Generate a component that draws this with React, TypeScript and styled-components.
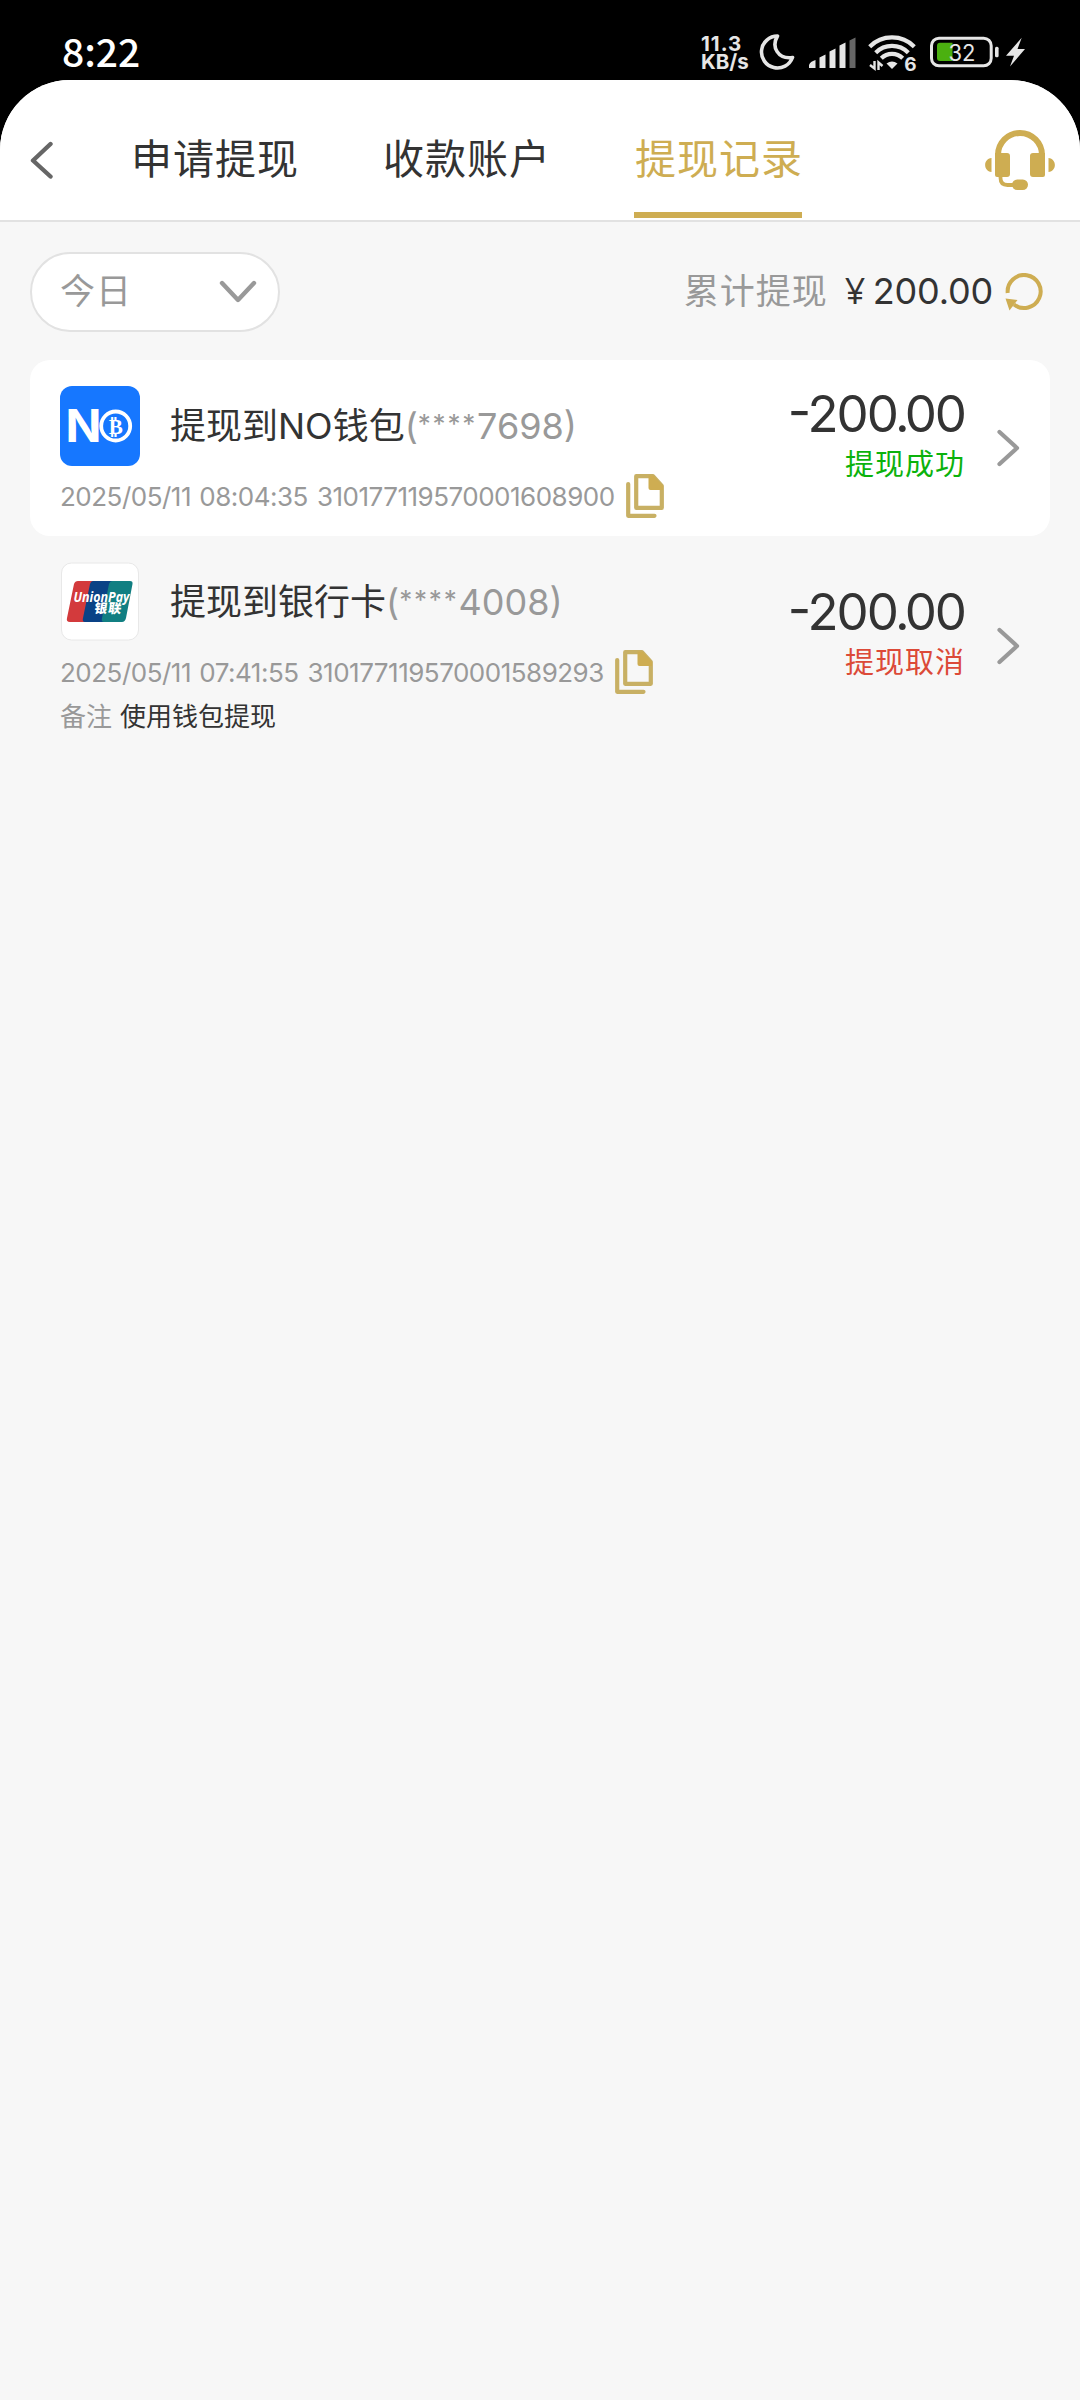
import React from "react";
import styled, { createGlobalStyle } from "styled-components";

const GOLD = "#cead52";
const INK = "#333333";
const MUTE = "#999999";

const Global = createGlobalStyle`
  * { box-sizing: border-box; }
  body { margin: 0; background: #000; font-family: Inter, "Noto Sans CJK SC", sans-serif; color: ${INK}; }
`;

const Page = styled.div`
  width: 1080px;
  height: 2400px;
  display: flex;
  flex-direction: column;
  background: #000;
  overflow: hidden;
`;

const StatusBar = styled.div`
  height: 80px;
  padding: 24px 54px 0 62px;
  display: flex;
  align-items: flex-start;
  color: #e6e6e6;
`;

const Clock = styled.div`
  flex: 1;
  font: 500 39px/52px "Noto Sans CJK SC", sans-serif;
  color: #fff;
`;

const Speed = styled.div`
  width: 50px;
  margin: 11px 7px 0 0;
  display: flex;
  flex-direction: column;
  font: 700 20.5px/18px Inter, sans-serif;
  white-space: nowrap;
`;

const Rate = styled.span`
  letter-spacing: 1px;
`;

const StatusGlyphs = styled.svg`
  display: block;
  flex: none;
`;

const Sheet = styled.main`
  flex: 1;
  display: flex;
  flex-direction: column;
  background: #f7f7f7;
  border-radius: 70px 70px 0 0;
  overflow: hidden;
`;

const Header = styled.header`
  height: 142px;
  display: flex;
  align-items: center;
  padding: 20px 25px 0 30px;
  background: #fff;
  border-bottom: 2px solid #e2e2e2;
`;

const Tabs = styled.nav`
  flex: 1;
  align-self: stretch;
  display: flex;
  gap: 84px;
  margin-top: -20px;
  padding-left: 77px;
`;

const Tab = styled.div<{ $active?: boolean }>`
  width: 168px;
  height: 138px;
  padding-left: 1px;
  border-bottom: 6px solid ${(p) => (p.$active ? GOLD : "transparent")};
  color: ${(p) => (p.$active ? GOLD : INK)};
  font-size: 41px;
  letter-spacing: 1px;
  line-height: 158px;
  white-space: nowrap;
`;

const Toolbar = styled.div`
  height: 138px;
  padding: 30px 36px 28px 30px;
  display: flex;
  justify-content: space-between;
  align-items: center;
`;

const Select = styled.div`
  width: 250px;
  height: 80px;
  padding: 0 21px 0 28px;
  display: flex;
  align-items: center;
  justify-content: space-between;
  border: 2px solid #e2e2e2;
  border-radius: 40px;
  background: #fff;
  color: ${MUTE};
`;

const SelectText = styled.span`
  padding-bottom: 7px;
  font-size: 35px;
  letter-spacing: 1px;
`;

const Total = styled.div`
  display: flex;
  align-items: center;
  white-space: nowrap;
`;

const TotalText = styled.div`
  display: flex;
  align-items: baseline;
  padding-bottom: 7px;
  margin-right: 12px;
  font-size: 36px;
`;

const TotalLabel = styled.span`
  color: ${MUTE};
  font-size: 35px;
  letter-spacing: 1px;
  margin-right: 17px;
`;

const Yen = styled.span`
  font-family: "Open Sans", sans-serif;
  width: 28px;
`;

const TotalValue = styled.span`
  letter-spacing: -0.2px;
`;

const List = styled.section`
  display: flex;
  flex-direction: column;
  padding: 0 30px;
`;

const Row = styled.article<{ $white?: boolean; $h: number }>`
  height: ${(p) => p.$h}px;
  padding: 0 30px;
  display: flex;
  align-items: center;
  border-radius: 20px;
  background: ${(p) => (p.$white ? "#fff" : "transparent")};
`;

const Details = styled.div`
  flex: 1;
  align-self: stretch;
  padding-top: 26px;
`;

const TitleLine = styled.div`
  height: 80px;
  display: flex;
  align-items: center;
  gap: 30px;
`;

const Title = styled.div`
  padding-bottom: 7px;
  font-size: 36px;
  white-space: nowrap;
`;

const Masked = styled.span`
  color: ${MUTE};
`;

const Stars = styled.span`
  font-size: 26px;
  line-height: 1;
  letter-spacing: 1.8px;
  vertical-align: 6px;
`;

const Meta = styled.div`
  height: 60px;
  display: flex;
  align-items: center;
  color: ${MUTE};
  font-size: 26px;
  letter-spacing: -0.5px;
  white-space: nowrap;
`;

const Stamp = styled.span`
  margin-right: 9px;
  word-spacing: 1.5px;
`;

const OrderId = styled.span`
  margin-right: 11.5px;
`;

const Memo = styled.div`
  display: flex;
  gap: 8px;
  font-size: 26px;
  line-height: 30px;
`;

const MemoLabel = styled.span`
  color: ${MUTE};
`;

const Figures = styled.div`
  display: flex;
  flex-direction: column;
  align-items: flex-end;
  margin-right: 32px;
  padding-bottom: 27px;
`;

const Amount = styled.div`
  font-size: 51px;
  line-height: 61px;
  letter-spacing: -2px;
  font-feature-settings: "case";
`;

const Point = styled.span`
  letter-spacing: -5px;
  margin-left: -2px;
`;

const State = styled.div<{ $ok: boolean }>`
  margin-top: -1px;
  font-size: 29px;
  letter-spacing: 1px;
  line-height: 44px;
  color: ${(p) => (p.$ok ? "#0bb20c" : "#dc4a38")};
`;

const BackIcon = () => (
  <svg width="23" height="38" viewBox="0 0 23 38" fill="none" stroke="#666" strokeWidth="4.4" strokeLinecap="round" strokeLinejoin="round">
    <path d="M20.5 3 3 19.5 20.5 35.5" />
  </svg>
);

const DownIcon = () => (
  <svg width="38" height="24" viewBox="0 0 38 24" fill="none" stroke={MUTE} strokeWidth="4.4" strokeLinecap="round" strokeLinejoin="round">
    <path d="M3 3 19 20 35 3" />
  </svg>
);

const NextIcon = () => (
  <svg width="23" height="38" viewBox="0 0 23 38" fill="none" stroke={MUTE} strokeWidth="4.2" strokeLinecap="round" strokeLinejoin="round">
    <path d="M2.5 3 20 19 2.5 35" />
  </svg>
);

const HeadsetIcon = () => (
  <svg width="70" height="60" viewBox="0 0 70 60" fill={GOLD}>
    <path d="M13 28V25a22 22 0 0 1 44 0v3" fill="none" stroke={GOLD} strokeWidth="6" />
    <path d="M10 23h12a3 3 0 0 1 3 3v18a3 3 0 0 1-3 3H12a2 2 0 0 1-2-2zM60 23H48a3 3 0 0 0-3 3v18a3 3 0 0 0 3 3h10a2 2 0 0 0 2-2z" />
    <path d="M6.500 28v14C-2 41-2 29 6.500 28zM63.500 28v14C72 41 72 29 63.500 28z" />
    <path d="M15.500 46v2q0 7 7 7H30" fill="none" stroke={GOLD} strokeWidth="3.800" />
    <rect x="27" y="49.500" width="16" height="10.500" rx="5.200" />
  </svg>
);

const RefreshIcon = () => (
  <svg width="39" height="38" viewBox="0 0 39 38">
    <path d="M2.700 20A16.500 16.500 0 1 1 9 31.500" fill="none" stroke={GOLD} strokeWidth="4" />
    <path d="M.5 25.500 12.500 27 4.500 37.500z" fill={GOLD} />
  </svg>
);

const CopyIcon = () => (
  <svg width="38" height="44" viewBox="0 0 38 44">
    <path d="M2.200 10v31.800H28.500" fill="none" stroke="#c8b064" strokeWidth="4.200" strokeLinecap="round" strokeLinejoin="round" />
    <path d="M10.200 2.200H27L35.800 12v21.800H10.200z" fill="none" stroke="#c8b064" strokeWidth="4.200" strokeLinejoin="round" />
    <path d="M22.500 1.500h5L37 12v4H24.500a2 2 0 0 1-2-2z" fill={GOLD} />
  </svg>
);

const NoLogo = () => (
  <svg width="80" height="80" viewBox="0 0 80 80">
    <rect width="80" height="80" rx="12" fill="#1677ff" />
    <text x="5.500" y="56" fill="#fff" fontFamily="Inter, sans-serif" fontWeight="700" fontSize="45" textLength="36" lengthAdjust="spacingAndGlyphs">N</text>
    <circle cx="55.700" cy="40" r="14.500" fill="none" stroke="#fff" strokeWidth="3.800" />
    <text x="55.800" y="47.500" fill="#fff" fontFamily="Liberation Serif, serif" fontWeight="700" fontSize="21" textAnchor="middle">₿</text>
  </svg>
);

const UnionPayLogo = () => (
  <svg width="80" height="80" viewBox="0 0 80 80">
    <rect x="1.500" y="1" width="77" height="77" rx="10" fill="#fff" stroke="#e8e8e8" />
    <path d="M18 19H35L27 60H10q-4 0-3-4L14 22q1-3 4-3z" fill="#d33a3c" />
    <path d="M33 19H54L46 60H25q-3 0-2-4L30 22q1-3 3-3z" fill="#0a4286" />
    <path d="M52 19H70q3 0 2.500 3L66 56q-1 4-4 4H44q-3 0-2-4L49 22q1-3 3-3z" fill="#117f82" />
    <text x="13.500" y="39.500" fill="#fff" fontFamily="Open Sans, sans-serif" fontStyle="italic" fontWeight="700" fontSize="14" textLength="56" lengthAdjust="spacingAndGlyphs">UnionPay</text>
    <text x="33" y="51" transform="translate(8 0) skewX(-8)" fill="#fff" fontFamily="Noto Sans CJK SC, sans-serif" fontWeight="900" fontSize="13" textLength="27">银联</text>
  </svg>
);

const Indicators = () => (
  <StatusGlyphs width="268" height="56" viewBox="758 24 268 56">
    <path d="M777.500 36A16 16 0 1 0 792.500 57.500C778 59.500 771 47 777.500 36z" fill="none" stroke="#e6e6e6" strokeWidth="3.600" strokeLinejoin="round" />
    <g fill="#e6e6e6">
      <path d="M809 68v-3q1-3.500 6.500-5v8zM819.500 57.500l6-3V68h-6zM829.500 51.500l6-3V68h-6zM839.500 45.500l6-3V68h-6z" />
      <path d="M849.500 40.500l6-3V68h-6z" fill="#666" />
      <path d="M892 69l-5.500-5.500q5.500-4 11 0z" />
      <rect x="995" y="46.700" width="3.600" height="10.600" rx="1.500" />
      <path d="M1021.700 37.700 1006 55.700h8L1010 66.500 1025 49h-7.500z" />
    </g>
    <g fill="none" stroke="#e6e6e6" strokeWidth="4.200">
      <path d="M869.700 46.700a31.500 31.500 0 0 1 44.600 0" />
      <path d="M875.700 52.700a23 23 0 0 1 32.600 0" />
      <path d="M881.300 58.300a15.200 15.200 0 0 1 21.400 0" />
    </g>
    <path d="M874.500 61V68.500L870 65M878.500 70V62.500L882.500 66" fill="none" stroke="#e6e6e6" strokeWidth="2.400" />
    <text x="910.500" y="70.500" fill="#e6e6e6" textAnchor="middle" fontFamily="Inter, sans-serif" fontWeight="700" fontSize="19">6</text>
    <rect x="931.500" y="38.200" width="59.700" height="27.600" rx="7.500" fill="none" stroke="#e6e6e6" strokeWidth="3" />
    <path d="M940 42.700h12.500V61H940q-3 0-3-3V45.700q0-3 3-3z" fill="#4bb010" />
    <text x="962" y="60.700" fill="#e6e6e6" textAnchor="middle" fontFamily="Inter, sans-serif" fontSize="23" textLength="27" lengthAdjust="spacingAndGlyphs">32</text>
  </StatusGlyphs>
);

const records = [
  { logo: <NoLogo />, title: "提现到NO钱包", tail: "7698", time: "2025/05/11 08:04:35", id: "310177119570001608900", ok: true, state: "提现成功", h: 176, memo: "" },
  { logo: <UnionPayLogo />, title: "提现到银行卡", tail: "4008", time: "2025/05/11 07:41:55", id: "310177119570001589293", ok: false, state: "提现取消", h: 220, memo: "使用钱包提现" },
];

export default function App() {
  return (
    <Page>
      <Global />
      <StatusBar>
        <Clock>8:22</Clock>
        <Speed><Rate>11.3</Rate><span>KB/s</span></Speed>
        <Indicators />
      </StatusBar>
      <Sheet>
        <Header>
          <BackIcon />
          <Tabs>
            <Tab>申请提现</Tab>
            <Tab>收款账户</Tab>
            <Tab $active>提现记录</Tab>
          </Tabs>
          <HeadsetIcon />
        </Header>
        <Toolbar>
          <Select><SelectText>今日</SelectText><DownIcon /></Select>
          <Total>
            <TotalText>
              <TotalLabel>累计提现</TotalLabel>
              <Yen>¥</Yen>
              <TotalValue>200.00</TotalValue>
            </TotalText>
            <RefreshIcon />
          </Total>
        </Toolbar>
        <List>
          {records.map((r) => (
            <Row key={r.id} $white={r.ok} $h={r.h}>
              <Details>
                <TitleLine>
                  {r.logo}
                  <Title>{r.title}<Masked>(<Stars>****</Stars>{r.tail})</Masked></Title>
                </TitleLine>
                <Meta><Stamp>{r.time}</Stamp><OrderId>{r.id}</OrderId><CopyIcon /></Meta>
                {r.memo && <Memo><MemoLabel>备注</MemoLabel><span>{r.memo}</span></Memo>}
              </Details>
              <Figures>
                <Amount>-200<Point>.</Point>00</Amount>
                <State $ok={r.ok}>{r.state}</State>
              </Figures>
              <NextIcon />
            </Row>
          ))}
        </List>
      </Sheet>
    </Page>
  );
}
